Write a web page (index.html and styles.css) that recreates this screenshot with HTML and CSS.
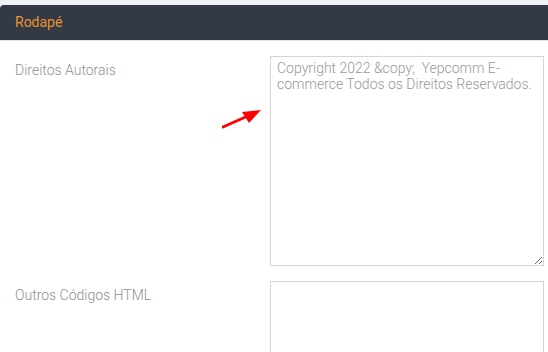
FILE: index.html
```html
<!DOCTYPE html>
<html lang="pt-BR">
<head>
  <meta charset="UTF-8">
  <meta name="viewport" content="width=device-width, initial-scale=1.0">
  <title>Rodapé</title>
  <link rel="stylesheet" href="styles.css">
</head>
<body>
  <div class="panel">
    <div class="panel-heading">Rodapé</div>
    <div class="panel-body">
      <div class="form-row">
        <label class="control-label" for="copyright">Direitos Autorais</label>
        <div class="control-wrap">
          <textarea id="copyright" class="form-control" rows="12">Copyright 2022 &amp;copy;  Yepcomm E-commerce Todos os Direitos Reservados.</textarea>
          <!-- red pointer arrow -->
          <svg class="pointer" width="44" height="22" viewBox="0 0 44 22">
            <line x1="1" y1="19" x2="28" y2="7" stroke="#ff0000" stroke-width="3" stroke-linecap="round"/>
            <polygon points="39,2 20,4 27,15" fill="#ff0000"/>
          </svg>
        </div>
      </div>
      <div class="form-row">
        <label class="control-label" for="html-extra">Outros Códigos HTML</label>
        <div class="control-wrap">
          <textarea id="html-extra" class="form-control" rows="12"></textarea>
        </div>
      </div>
    </div>
  </div>
</body>
</html>
```

FILE: styles.css
```css
body {
  margin: 0;
  padding-top: 5px;
  background-color: #eef1f5;
  font-family: Roboto, "Liberation Sans", sans-serif;
  font-size: 14px;
  color: #999;
  overflow: hidden;
}
.panel {
  background: #fff;
  border-radius: 4px 0 0 0;
  min-height: 400px;
}
.panel-heading {
  height: 28px;
  padding: 7px 15px 0;
  line-height: 20px;
  background-color: #333a46;
  color: #e8932c;
  border-radius: 4px 0 0 0;
  border-bottom: 1px solid #dfe3ea;
}
.panel-body {
  padding: 15px 0 0 15px;
}
.form-row {
  display: grid;
  grid-template-columns: 255px 274px;
  margin-bottom: 15px;
}
.control-label {
  padding-top: 4px;
  line-height: 20px;
  font-weight: 300;
  color: #8f8f8f;
}
.control-wrap {
  position: relative;
}
.form-control {
  display: block;
  box-sizing: border-box;
  width: 274px;
  height: 210px;
  margin: 0;
  padding: 3px 6px 2px;
  border: 1px solid #d5d5d5;
  border-radius: 0;
  font-family: Roboto, "Liberation Sans", sans-serif;
  font-size: 14px;
  font-weight: 300;
  line-height: 16px;
  color: #999;
  background: #fff;
  resize: vertical;
}
.pointer {
  position: absolute;
  left: -48px;
  top: 52px;
}
```
